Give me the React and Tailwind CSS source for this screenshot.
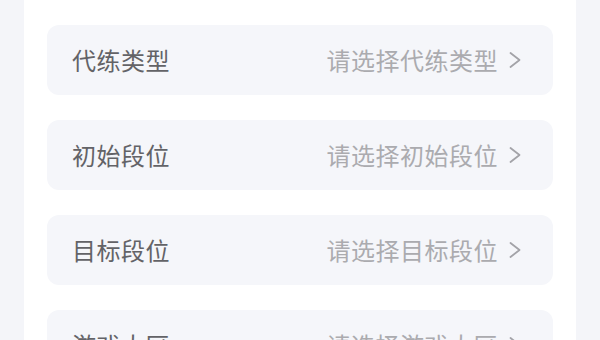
const rows = [
  { label: '代练类型', placeholder: '请选择代练类型' },
  { label: '初始段位', placeholder: '请选择初始段位' },
  { label: '目标段位', placeholder: '请选择目标段位' },
  { label: '游戏大区', placeholder: '请选择游戏大区' },
];

function Chevron() {
  return (
    <svg width="13" height="18" viewBox="0 0 13 18" fill="none" className="shrink-0">
      <polyline points="1.5,2 10.5,9 1.5,16" stroke="#a3a3a8" strokeWidth="1.8" strokeLinecap="round" strokeLinejoin="round" />
    </svg>
  );
}

export default function App() {
  return (
    <div className="h-[340px] w-[600px] overflow-hidden bg-[#f4f5f9] px-[24px] font-['Noto_Sans_CJK_SC','Noto_Sans',sans-serif]">
      <div className="flex flex-col gap-[25px] rounded-b-xl bg-white px-[23px] pt-[25px] pb-6">
        {rows.map((r) => (
          <div key={r.label} className="flex h-[70px] shrink-0 items-center justify-between rounded-[12px] bg-[#f5f6fa] pl-[25px] pr-[31px]">
            <span className="text-[24px] tracking-[0.5px] text-[#636367]">{r.label}</span>
            <div className="flex items-center gap-[11px]">
              <span className="text-[24px] tracking-[0.5px] text-[#ababaf]">{r.placeholder}</span>
              <Chevron />
            </div>
          </div>
        ))}
      </div>
    </div>
  );
}
